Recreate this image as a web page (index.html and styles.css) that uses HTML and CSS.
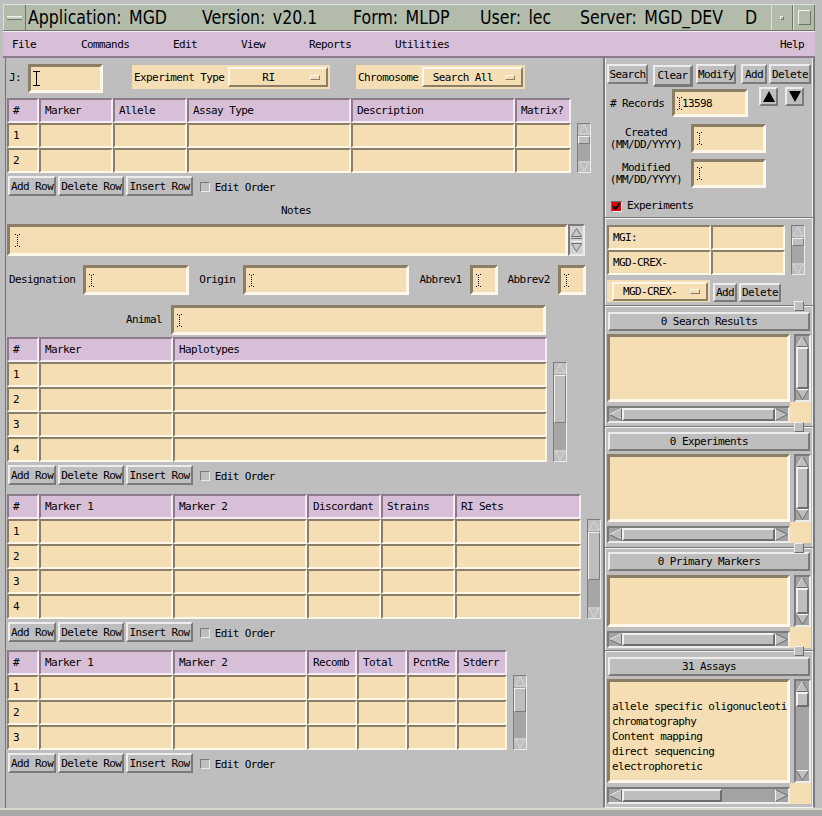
FILE: index.html
```html
<!DOCTYPE html>
<html>
<head>
<meta charset="utf-8">
<title>MGD MLDP</title>
<link rel="stylesheet" href="styles.css">
</head>
<body>
<div class="win">
  <div class="titlebar">
    <div class="tb-menu"><span class="tb-dash"></span></div>
    <div class="tb-title"><div class="tb-clip"><span class="tt tt1"><span class="ttx">Application: MGD</span></span><span class="tt tt2"><span class="ttx">Version: v20.1</span></span><span class="tt tt3"><span class="ttx">Form: MLDP</span></span><span class="tt tt4"><span class="ttx">User: lec</span></span><span class="tt tt5"><span class="ttx">Server: MGD_DEV</span></span><span class="tt tt6"><span class="ttx">Database: mgd</span></span></div></div>
    <div class="tb-btn"><span class="tb-min"></span></div>
    <div class="tb-btn"><span class="tb-max"></span></div>
  </div>
  <div class="menubar">
    <span class="mi mi-file">File</span><span class="mi mi-cmd">Commands</span><span class="mi mi-edit">Edit</span><span class="mi mi-view">View</span><span class="mi mi-rep">Reports</span><span class="mi mi-util">Utilities</span><span class="mi mi-help">Help</span>
  </div>
  <div class="main">
    <div class="left">
      <div class="row r-top">
        <span class="lbl l-j">J:</span>
        <div class="tf tf-j"><svg class="cur-solid" width="7" height="15" viewBox="0 0 7 15"><path d="M0 0.5h7M3.5 0.5v14M0 14.5h7" stroke="#000" fill="none"/></svg></div>
        <div class="opt o-exp"><span class="opt-lbl">Experiment Type</span><div class="ob ob-exp"><span class="ob-t">RI</span><span class="ind"></span></div></div>
        <div class="opt o-chr"><span class="opt-lbl">Chromosome</span><div class="ob ob-chr"><span class="ob-t">Search All</span><span class="ind"></span></div></div>
      </div>

      <div class="tbl t1">
        <div class="grid g1">
          <div class="hc">#</div><div class="hc">Marker</div><div class="hc">Allele</div><div class="hc">Assay Type</div><div class="hc">Description</div><div class="hc">Matrix?</div>
          <div class="c">1</div><div class="c"></div><div class="c"></div><div class="c"></div><div class="c"></div><div class="c"></div>
          <div class="c">2</div><div class="c"></div><div class="c"></div><div class="c"></div><div class="c"></div><div class="c"></div>
        </div>
        <div class="tsb sb-h50">
          <div class="tarr"><svg width="12" height="11" viewBox="0 0 12 11"><path d="M6 1L11 10H1Z" fill="none" stroke="#f2f2f2" stroke-dasharray="1 1"/></svg></div>
          <div class="ttr"><div class="tth" style="margin-top:1px;height:8px"></div></div>
          <div class="tarr"><svg width="12" height="11" viewBox="0 0 12 11"><path d="M6 10L11 1H1Z" fill="none" stroke="#f2f2f2" stroke-dasharray="1 1"/></svg></div>
        </div>
      </div>
      <div class="btnrow">
        <div class="btn">Add Row</div><div class="btn">Delete Row</div><div class="btn">Insert Row</div><span class="chk"></span><span class="lbl">Edit Order</span>
      </div>

      <div class="notes-lbl">Notes</div>
      <div class="row r-notes">
        <div class="tf tf-notes"><svg class="cur-dot" width="5" height="13" viewBox="0 0 5 13"><path d="M0 0.5h1M4 0.5h1M2.5 1v11M0 12.5h1M4 12.5h1" stroke="#000" stroke-dasharray="1 1" fill="none"/></svg></div>
        <div class="nsb">
          <svg width="11" height="9" viewBox="0 0 11 9"><path d="M5.5 0.5L10.5 8.5H0.5Z" fill="#c8c8c8" stroke="#707070"/></svg>
          <span class="nsb-th"></span>
          <svg width="11" height="9" viewBox="0 0 11 9"><path d="M5.5 8.5L10.5 0.5H0.5Z" fill="#c8c8c8" stroke="#707070"/></svg>
        </div>
      </div>

      <div class="row r-desig">
        <span class="lbl l-first">Designation</span>
        <div class="tf tf-desig"><svg class="cur-dot" width="5" height="13" viewBox="0 0 5 13"><path d="M0 0.5h1M4 0.5h1M2.5 1v11M0 12.5h1M4 12.5h1" stroke="#000" stroke-dasharray="1 1" fill="none"/></svg></div>
        <span class="lbl l-next">Origin</span>
        <div class="tf tf-origin"><svg class="cur-dot" width="5" height="13" viewBox="0 0 5 13"><path d="M0 0.5h1M4 0.5h1M2.5 1v11M0 12.5h1M4 12.5h1" stroke="#000" stroke-dasharray="1 1" fill="none"/></svg></div>
        <span class="lbl l-next">Abbrev1</span>
        <div class="tf tf-abbr"><svg class="cur-dot" width="5" height="13" viewBox="0 0 5 13"><path d="M0 0.5h1M4 0.5h1M2.5 1v11M0 12.5h1M4 12.5h1" stroke="#000" stroke-dasharray="1 1" fill="none"/></svg></div>
        <span class="lbl l-next">Abbrev2</span>
        <div class="tf tf-abbr"><svg class="cur-dot" width="5" height="13" viewBox="0 0 5 13"><path d="M0 0.5h1M4 0.5h1M2.5 1v11M0 12.5h1M4 12.5h1" stroke="#000" stroke-dasharray="1 1" fill="none"/></svg></div>
      </div>

      <div class="row r-animal">
        <span class="lbl l-animal">Animal</span>
        <div class="tf tf-animal"><svg class="cur-dot" width="5" height="13" viewBox="0 0 5 13"><path d="M0 0.5h1M4 0.5h1M2.5 1v11M0 12.5h1M4 12.5h1" stroke="#000" stroke-dasharray="1 1" fill="none"/></svg></div>
      </div>

      <div class="tbl t2">
        <div class="grid g2">
          <div class="hc">#</div><div class="hc">Marker</div><div class="hc">Haplotypes</div>
          <div class="c">1</div><div class="c"></div><div class="c"></div>
          <div class="c">2</div><div class="c"></div><div class="c"></div>
          <div class="c">3</div><div class="c"></div><div class="c"></div>
          <div class="c">4</div><div class="c"></div><div class="c"></div>
        </div>
        <div class="tsb sb-h100">
          <div class="tarr"><svg width="12" height="11" viewBox="0 0 12 11"><path d="M6 1L11 10H1Z" fill="none" stroke="#f2f2f2" stroke-dasharray="1 1"/></svg></div>
          <div class="ttr"><div class="tth" style="margin-top:1px;height:48px"></div></div>
          <div class="tarr"><svg width="12" height="11" viewBox="0 0 12 11"><path d="M6 10L11 1H1Z" fill="none" stroke="#f2f2f2" stroke-dasharray="1 1"/></svg></div>
        </div>
      </div>
      <div class="btnrow">
        <div class="btn">Add Row</div><div class="btn">Delete Row</div><div class="btn">Insert Row</div><span class="chk"></span><span class="lbl">Edit Order</span>
      </div>

      <div class="tbl t3">
        <div class="grid g3">
          <div class="hc">#</div><div class="hc">Marker 1</div><div class="hc">Marker 2</div><div class="hc">Discordant</div><div class="hc">Strains</div><div class="hc">RI Sets</div>
          <div class="c">1</div><div class="c"></div><div class="c"></div><div class="c"></div><div class="c"></div><div class="c"></div>
          <div class="c">2</div><div class="c"></div><div class="c"></div><div class="c"></div><div class="c"></div><div class="c"></div>
          <div class="c">3</div><div class="c"></div><div class="c"></div><div class="c"></div><div class="c"></div><div class="c"></div>
          <div class="c">4</div><div class="c"></div><div class="c"></div><div class="c"></div><div class="c"></div><div class="c"></div>
        </div>
        <div class="tsb sb-h100">
          <div class="tarr"><svg width="12" height="11" viewBox="0 0 12 11"><path d="M6 1L11 10H1Z" fill="none" stroke="#f2f2f2" stroke-dasharray="1 1"/></svg></div>
          <div class="ttr"><div class="tth" style="margin-top:1px;height:48px"></div></div>
          <div class="tarr"><svg width="12" height="11" viewBox="0 0 12 11"><path d="M6 10L11 1H1Z" fill="none" stroke="#f2f2f2" stroke-dasharray="1 1"/></svg></div>
        </div>
      </div>
      <div class="btnrow">
        <div class="btn">Add Row</div><div class="btn">Delete Row</div><div class="btn">Insert Row</div><span class="chk"></span><span class="lbl">Edit Order</span>
      </div>

      <div class="tbl t4">
        <div class="grid g4">
          <div class="hc">#</div><div class="hc">Marker 1</div><div class="hc">Marker 2</div><div class="hc">Recomb</div><div class="hc">Total</div><div class="hc">PcntRe</div><div class="hc">Stderr</div>
          <div class="c">1</div><div class="c"></div><div class="c"></div><div class="c"></div><div class="c"></div><div class="c"></div><div class="c"></div>
          <div class="c">2</div><div class="c"></div><div class="c"></div><div class="c"></div><div class="c"></div><div class="c"></div><div class="c"></div>
          <div class="c">3</div><div class="c"></div><div class="c"></div><div class="c"></div><div class="c"></div><div class="c"></div><div class="c"></div>
        </div>
        <div class="tsb sb-h75">
          <div class="tarr"><svg width="12" height="11" viewBox="0 0 12 11"><path d="M6 1L11 10H1Z" fill="none" stroke="#f2f2f2" stroke-dasharray="1 1"/></svg></div>
          <div class="ttr"><div class="tth" style="margin-top:1px;height:24px"></div></div>
          <div class="tarr"><svg width="12" height="11" viewBox="0 0 12 11"><path d="M6 10L11 1H1Z" fill="none" stroke="#f2f2f2" stroke-dasharray="1 1"/></svg></div>
        </div>
      </div>
      <div class="btnrow">
        <div class="btn">Add Row</div><div class="btn">Delete Row</div><div class="btn">Insert Row</div><span class="chk"></span><span class="lbl">Edit Order</span>
      </div>
    </div>

    <div class="right">
      <div class="rtop">
        <div class="rbtns">
          <div class="btn b-search">Search</div><div class="btn b-clear">Clear</div><div class="btn b-mod">Modify</div><div class="btn b-add">Add</div><div class="btn b-del">Delete</div>
        </div>
        <div class="rrow r-rec">
          <span class="lbl l-rec"># Records</span>
          <div class="tf tf-rec"><svg class="cur-dot" width="5" height="13" viewBox="0 0 5 13"><path d="M0 0.5h1M4 0.5h1M2.5 1v11M0 12.5h1M4 12.5h1" stroke="#000" stroke-dasharray="1 1" fill="none"/></svg><span class="rec-val">13598</span></div>
          <div class="abtn a-up"><svg width="12" height="11" viewBox="0 0 12 11"><path d="M6 0L12 11H0Z" fill="#000"/></svg></div>
          <div class="abtn a-dn"><svg width="12" height="11" viewBox="0 0 12 11"><path d="M6 11L12 0H0Z" fill="#000"/></svg></div>
        </div>
        <div class="rrow r-date">
          <span class="lbl l-date">Created<br>(MM/DD/YYYY)</span>
          <div class="tf tf-date"><svg class="cur-dot" width="5" height="13" viewBox="0 0 5 13"><path d="M0 0.5h1M4 0.5h1M2.5 1v11M0 12.5h1M4 12.5h1" stroke="#000" stroke-dasharray="1 1" fill="none"/></svg></div>
        </div>
        <div class="rrow r-date">
          <span class="lbl l-date">Modified<br>(MM/DD/YYYY)</span>
          <div class="tf tf-date"><svg class="cur-dot" width="5" height="13" viewBox="0 0 5 13"><path d="M0 0.5h1M4 0.5h1M2.5 1v11M0 12.5h1M4 12.5h1" stroke="#000" stroke-dasharray="1 1" fill="none"/></svg></div>
        </div>
        <div class="rchk">
          <svg class="chk-on" width="11" height="11" viewBox="0 0 11 11"><rect x="0" y="0" width="11" height="11" fill="#6e6e6e"/><rect x="1" y="1" width="10" height="10" fill="#f0f0f0"/><rect x="1" y="1" width="9" height="9" fill="#e00000"/><path d="M2 5l2.5 3L9 2" stroke="#000" stroke-width="2" fill="none"/></svg>
          <span class="lbl">Experiments</span>
        </div>
      </div>
      <div class="etch"></div>
      <div class="rmgi">
        <div class="tbl mgi-tbl">
          <div class="grid g-mgi">
            <div class="c">MGI:</div><div class="c"></div>
            <div class="c">MGD-CREX-</div><div class="c"></div>
          </div>
          <div class="tsb sb-h50 sb-mgi">
            <div class="tarr"><svg width="12" height="11" viewBox="0 0 12 11"><path d="M6 1L11 10H1Z" fill="none" stroke="#f2f2f2" stroke-dasharray="1 1"/></svg></div>
            <div class="ttr"><div class="tth" style="margin-top:1px;height:8px"></div></div>
            <div class="tarr"><svg width="12" height="11" viewBox="0 0 12 11"><path d="M6 10L11 1H1Z" fill="none" stroke="#f2f2f2" stroke-dasharray="1 1"/></svg></div>
          </div>
        </div>
        <div class="mgi-ctl">
          <div class="opt o-mgi"><div class="ob ob-mgi"><span class="ob-t">MGD-CREX-</span><span class="ind"></span></div></div>
          <div class="btn b-madd">Add</div><div class="btn b-mdel">Delete</div>
        </div>
      </div>

      <div class="sep"><span class="sash"></span></div>
      <div class="pane p-std">
        <div class="plbl">0 Search Results</div>
        <div class="lw lw-68">
          <div class="list"></div>
          <div class="lvsb">
            <svg width="13" height="11" viewBox="0 0 13 11"><path d="M6.5 0.5L12.5 10.5H0.5Z" fill="#bebebe" stroke="#6e6e6e"/><path d="M0.5 10.5L6.5 0.5" stroke="#f4f4f4"/></svg>
            <div class="lvtr"><div class="lvth lvth-full"></div></div>
            <svg width="13" height="11" viewBox="0 0 13 11"><path d="M6.5 10.5L12.5 0.5H0.5Z" fill="#bebebe" stroke="#6e6e6e"/><path d="M0.5 0.5H12.5" stroke="#f4f4f4"/></svg>
          </div>
          <div class="corner"></div>
          <div class="lhsb">
            <svg width="13" height="13" viewBox="0 0 13 13"><path d="M0.5 6.5L12.5 0.5V12.5Z" fill="#bebebe" stroke="#6e6e6e"/><path d="M0.5 6.5L12.5 0.5" stroke="#f4f4f4"/></svg>
            <div class="lhtr"><div class="lhth lhth-full"></div></div>
            <svg width="13" height="13" viewBox="0 0 13 13"><path d="M12.5 6.5L0.5 0.5V12.5Z" fill="#bebebe" stroke="#6e6e6e"/><path d="M0.5 0.5V12.5" stroke="#f4f4f4"/></svg>
          </div>
        </div>
      </div>
      <div class="sep"><span class="sash"></span></div>
      <div class="pane p-std p-exp">
        <div class="plbl">0 Experiments</div>
        <div class="lw lw-68">
          <div class="list"></div>
          <div class="lvsb">
            <svg width="13" height="11" viewBox="0 0 13 11"><path d="M6.5 0.5L12.5 10.5H0.5Z" fill="#bebebe" stroke="#6e6e6e"/><path d="M0.5 10.5L6.5 0.5" stroke="#f4f4f4"/></svg>
            <div class="lvtr"><div class="lvth lvth-full"></div></div>
            <svg width="13" height="11" viewBox="0 0 13 11"><path d="M6.5 10.5L12.5 0.5H0.5Z" fill="#bebebe" stroke="#6e6e6e"/><path d="M0.5 0.5H12.5" stroke="#f4f4f4"/></svg>
          </div>
          <div class="corner"></div>
          <div class="lhsb">
            <svg width="13" height="13" viewBox="0 0 13 13"><path d="M0.5 6.5L12.5 0.5V12.5Z" fill="#bebebe" stroke="#6e6e6e"/><path d="M0.5 6.5L12.5 0.5" stroke="#f4f4f4"/></svg>
            <div class="lhtr"><div class="lhth lhth-full"></div></div>
            <svg width="13" height="13" viewBox="0 0 13 13"><path d="M12.5 6.5L0.5 0.5V12.5Z" fill="#bebebe" stroke="#6e6e6e"/><path d="M0.5 0.5V12.5" stroke="#f4f4f4"/></svg>
          </div>
        </div>
      </div>
      <div class="sep"><span class="sash"></span></div>
      <div class="pane p-prim">
        <div class="plbl">0 Primary Markers</div>
        <div class="lw lw-52">
          <div class="list"></div>
          <div class="lvsb">
            <svg width="13" height="11" viewBox="0 0 13 11"><path d="M6.5 0.5L12.5 10.5H0.5Z" fill="#bebebe" stroke="#6e6e6e"/><path d="M0.5 10.5L6.5 0.5" stroke="#f4f4f4"/></svg>
            <div class="lvtr"><div class="lvth lvth-full"></div></div>
            <svg width="13" height="11" viewBox="0 0 13 11"><path d="M6.5 10.5L12.5 0.5H0.5Z" fill="#bebebe" stroke="#6e6e6e"/><path d="M0.5 0.5H12.5" stroke="#f4f4f4"/></svg>
          </div>
          <div class="corner"></div>
          <div class="lhsb">
            <svg width="13" height="13" viewBox="0 0 13 13"><path d="M0.5 6.5L12.5 0.5V12.5Z" fill="#bebebe" stroke="#6e6e6e"/><path d="M0.5 6.5L12.5 0.5" stroke="#f4f4f4"/></svg>
            <div class="lhtr"><div class="lhth lhth-full"></div></div>
            <svg width="13" height="13" viewBox="0 0 13 13"><path d="M12.5 6.5L0.5 0.5V12.5Z" fill="#bebebe" stroke="#6e6e6e"/><path d="M0.5 0.5V12.5" stroke="#f4f4f4"/></svg>
          </div>
        </div>
      </div>
      <div class="sep"><span class="sash"></span></div>
      <div class="pane p-assay">
        <div class="plbl">31 Assays</div>
        <div class="lw lw-104">
          <div class="list">
            <div class="li"></div>
            <div class="li">allele specific oligonucleoti</div>
            <div class="li">chromatography</div>
            <div class="li">Content mapping</div>
            <div class="li">direct sequencing</div>
            <div class="li">electrophoretic</div>
          </div>
          <div class="lvsb">
            <svg width="13" height="11" viewBox="0 0 13 11"><path d="M6.5 0.5L12.5 10.5H0.5Z" fill="#bebebe" stroke="#6e6e6e"/><path d="M0.5 10.5L6.5 0.5" stroke="#f4f4f4"/></svg>
            <div class="lvtr"><div class="lvth" style="height:15px"></div></div>
            <svg width="13" height="11" viewBox="0 0 13 11"><path d="M6.5 10.5L12.5 0.5H0.5Z" fill="#bebebe" stroke="#6e6e6e"/><path d="M0.5 0.5H12.5" stroke="#f4f4f4"/></svg>
          </div>
          <div class="corner"></div>
          <div class="lhsb">
            <svg width="13" height="13" viewBox="0 0 13 13"><path d="M0.5 6.5L12.5 0.5V12.5Z" fill="#bebebe" stroke="#6e6e6e"/><path d="M0.5 6.5L12.5 0.5" stroke="#f4f4f4"/></svg>
            <div class="lhtr"><div class="lhth" style="width:100px"></div></div>
            <svg width="13" height="13" viewBox="0 0 13 13"><path d="M12.5 6.5L0.5 0.5V12.5Z" fill="#bebebe" stroke="#6e6e6e"/><path d="M0.5 0.5V12.5" stroke="#f4f4f4"/></svg>
          </div>
        </div>
      </div>
    </div>
  </div>
  <div class="bottom"></div>
</div>
</body>
</html>
```

FILE: styles.css
```css
* { box-sizing: border-box; margin: 0; padding: 0; }
body { margin: 0; background: #bebebe; }

.win {
  width: 822px; height: 816px; overflow: hidden;
  background: #bebebe;
  display: flex; flex-direction: column;
  font: 11px "DejaVu Sans Mono", "Liberation Mono", monospace;
  letter-spacing: -0.6px;
  color: #000;
}

/* ---------- title bar ---------- */
.titlebar {
  height: 27px; margin: 4px 7px 0 3px; flex: none;
  display: flex; background: #b3bcaa;
  border-top: 1px solid #dde2d6; border-bottom: 1px solid #6f7768;
}
.tb-menu {
  width: 23px; flex: none; display: flex; align-items: center; justify-content: center;
  border-left: 1px solid #dde2d6; border-right: 1px solid #6f7768;
}
.tb-dash { width: 15px; height: 4px; background: #c9d0c1; border-top: 1px solid #f0f2ec; border-bottom: 1px solid #6f7768; }
.tb-title { flex: 1; min-width: 0; padding: 0 14px 0 2px; overflow: hidden; }
.tb-clip {
  overflow: hidden; white-space: nowrap; height: 25px;
  font-family: "DejaVu Sans", sans-serif;
  font-size: 20px; line-height: 25px;
  letter-spacing: 0;
}
.tt { display: inline-block; vertical-align: top; height: 25px; }
.ttx { display: inline-block; vertical-align: top; transform: scaleX(0.79); transform-origin: 0 50%; word-spacing: 3px; }
.tt1 { width: 174px; }
.tt2 { width: 151px; }
.tt3 { width: 127px; }
.tt4 { width: 100px; }
.tt5 { width: 165px; }
.tt6 { width: 120px; }
.tb-btn {
  width: 22px; flex: none; display: flex; align-items: center; justify-content: center;
  border-left: 1px solid #dde2d6; border-right: 1px solid #6f7768;
}
.tb-min { width: 4px; height: 4px; border: 1px solid; border-color: #f0f2ec #6f7768 #6f7768 #f0f2ec; }
.tb-max { width: 13px; height: 15px; border: 1px solid; border-color: #f0f2ec #6f7768 #6f7768 #f0f2ec; }

/* ---------- menu bar ---------- */
.menubar {
  height: 27px; margin: 0 7px 0 3px; flex: none;
  display: flex; align-items: center;
  background: #d8bfd8; padding-left: 9px;
  border-top: 1px solid #f6ecf6; border-bottom: 2px solid #8b7b8b;
}
.mi { display: inline-block; }
.mi-file { width: 69px; }
.mi-cmd { width: 92px; }
.mi-edit { width: 68px; }
.mi-view { width: 68px; }
.mi-rep { width: 86px; }
.mi-help { margin-left: auto; padding-right: 11px; }

/* ---------- main ---------- */
.main { display: flex; height: 750px; flex: none; margin-right: 7px; }
.left {
  width: 603px; padding-left: 4px;
  border-left: 3px solid #bebebe;
  box-shadow: inset 2px 0 0 #bebebe, inset 3px 0 0 #747474;
  display: flex; flex-direction: column;
}
.lbl { white-space: nowrap; line-height: 12px; }
.row { display: flex; align-items: center; flex: none; }

/* text fields */
.tf {
  background: #f5deb3; flex: none;
  border: 3px solid; border-color: #8b7e66 #fff8ea #fff8ea #8b7e66;
  display: flex; align-items: center; padding-left: 3px;
}
.cur-dot { display: block; }
.cur-solid { display: block; }

.r-top { margin-top: 6px; height: 29px; align-items: flex-start; }
.l-j { margin: 8px 0 0 2px; }
.tf-j { margin-left: 7px; width: 75px; height: 29px; padding-left: 2px; }

/* option menus */
.opt { background: #f5deb3; display: flex; align-items: center; padding: 0 2px; height: 24px; flex: none; }
.opt-lbl { white-space: nowrap; flex: none; }
.o-exp { margin: 1px 0 0 29px; width: 198px; }
.o-chr { margin: 1px 0 0 26px; width: 169px; }
.ob {
  height: 20px; margin-left: 4px; display: flex; align-items: center; flex: none;
  border: 2px solid; border-color: #fff8ea #8b7e66 #8b7e66 #fff8ea;
}
.ob-t { flex: 1; text-align: center; white-space: nowrap; }
.ob-exp { width: 100px; }
.ob-chr { width: 101px; }
.ind {
  width: 10px; height: 5px; margin: 0 6px 0 4px; flex: none;
  border: 1px solid; border-color: #fff8ea #8b7e66 #8b7e66 #fff8ea;
}

/* tables */
.tbl { display: flex; align-items: flex-start; flex: none; }
.grid { display: grid; grid-auto-rows: 25px; background: #fff8ea; }
.hc, .c {
  border: 2px solid; padding-left: 4px;
  display: flex; align-items: center; white-space: nowrap; overflow: hidden;
}
.hc { background: #d8bfd8; border-color: #8b7b8b #f6ecf6 #f6ecf6 #8b7b8b; }
.c { background: #f5deb3; border-color: #8b7e66 #fff8ea #fff8ea #8b7e66; }
.g1 { grid-template-columns: 32px 74px 74px 164px 164px 56px; }
.g2 { grid-template-columns: 32px 134px 374px; }
.g3 { grid-template-columns: 32px 134px 134px 74px 74px 126px; }
.g4 { grid-template-columns: 32px 134px 134px 50px 50px 50px 50px; }
.g-mgi { grid-template-columns: 104px 74px; }

.t1 { margin-top: 5px; }
.t2 { margin-top: 2px; }
.t3 { margin-top: 9px; }
.t4 { margin-top: 8px; }

/* table scrollbars */
.tsb {
  width: 14px; margin: 25px 0 0 6px; flex: none;
  border: 1px solid; border-color: #7c7c7c #ececec #ececec #7c7c7c;
  background: #a6a6a6; display: flex; flex-direction: column;
}
.sb-mgi { margin-top: 0; }
.sb-h50 { height: 50px; }
.sb-h75 { height: 75px; }
.sb-h100 { height: 100px; }
.tarr { height: 11px; background: #bebebe; flex: none; }
.tarr svg { display: block; }
.ttr { flex: 1; }
.tth { background: #bebebe; border: 1px solid; border-color: #f0f0f0 #7c7c7c #7c7c7c #f0f0f0; }

/* buttons */
.btnrow { display: flex; align-items: center; height: 20px; margin-top: 3px; flex: none; padding-left: 1px; }
.btn {
  height: 20px; padding: 0 1px; background: #bebebe; flex: none;
  border: 2px solid; border-color: #ececec #7a7a7a #7a7a7a #ececec;
  display: flex; align-items: center; justify-content: center; white-space: nowrap;
}
.btnrow .btn + .btn { margin-left: 2px; }
.chk {
  width: 10px; height: 10px; margin: 2px 5px 0 7px; flex: none;
  border: 1px solid; border-color: #7a7a7a #ececec #ececec #7a7a7a;
}
.btnrow .lbl { margin-top: 3px; }

/* notes */
.notes-lbl { margin-top: 9px; height: 12px; line-height: 12px; width: 578px; text-align: center; flex: none; }
.r-notes { margin-top: 7px; height: 32px; }
.tf-notes { width: 561px; height: 32px; padding-left: 5px; }
.nsb {
  width: 17px; height: 32px; background: #d2d2d2; flex: none;
  border: 2px solid; border-color: #7c7c7c #ececec #ececec #7c7c7c;
  display: flex; flex-direction: column; align-items: center; justify-content: center;
}
.nsb svg { display: block; }
.nsb-th { width: 11px; height: 4px; margin: 1px 0; border-top: 1px solid #707070; border-bottom: 1px solid #f4f4f4; }

.r-desig { margin-top: 9px; height: 30px; }
.l-first { margin-left: 2px; margin-right: 8px; }
.l-next { margin-left: 10px; margin-right: 8px; }
.tf-desig { width: 106px; height: 30px; }
.tf-origin { width: 166px; height: 30px; }
.tf-abbr { width: 28px; height: 30px; }

.r-animal { margin-top: 10px; height: 30px; }
.l-animal { margin-left: 119px; margin-right: 9px; }
.tf-animal { width: 375px; height: 30px; }

/* ---------- right panel ---------- */
.right {
  width: 212px; display: flex; flex-direction: column;
  border-left: 2px solid; border-right: 2px solid; border-bottom: 1px solid #f0f0f0;
  border-left-color: #7a7a7a; border-right-color: #7a7a7a;
  box-shadow: inset 1px 0 0 #f0f0f0, inset -1px 0 0 #f0f0f0;
}
.rtop { height: 159px; padding: 6px 0 0 2px; flex: none; display: flex; flex-direction: column; }
.rbtns { display: flex; align-items: flex-start; height: 22px; flex: none; }
.b-search { width: 41px; }
.b-clear { width: 40px; height: 22px; margin-left: 5px; margin-top: 1px; border-width: 2px 3px 3px 2px; }
.b-mod { width: 40px; margin-left: 3px; }
.b-add { width: 26px; margin-left: 5px; }
.b-del { width: 42px; margin-left: 2px; }

.rrow { display: flex; align-items: center; flex: none; }
.r-rec { margin-top: 1px; height: 31px; align-items: flex-start; }
.l-rec { margin: 11px 0 0 3px; width: 62px; }
.tf-rec { width: 76px; height: 28px; margin-top: 2px; padding-left: 2px; }
.abtn {
  width: 19px; height: 19px; background: #bebebe; flex: none;
  border: 2px solid; border-color: #ececec #7a7a7a #7a7a7a #ececec;
  display: flex; align-items: center; justify-content: center;
}
.abtn svg { display: block; }
.a-up { margin-left: 11px; }
.a-dn { margin-left: 7px; }

.r-date { margin-top: 6px; height: 29px; }
.l-date { width: 78px; text-align: center; line-height: 12px; margin-top: 1px; }
.tf-date { width: 75px; height: 29px; margin-left: 6px; }

.rchk { display: flex; align-items: center; margin-top: 12px; height: 12px; padding-left: 4px; flex: none; }
.chk-on { display: block; margin-right: 5px; }

.etch { height: 2px; flex: none; border-top: 1px solid #7a7a7a; border-bottom: 1px solid #f0f0f0; }

.rmgi { height: 86px; padding: 6px 0 0 2px; flex: none; display: flex; flex-direction: column; }
.mgi-ctl { display: flex; align-items: flex-start; margin-top: 5px; height: 22px; }
.o-mgi { width: 103px; height: 22px; padding: 0; }
.ob-mgi { width: 96px; height: 19px; margin-left: 5px; }
.b-madd { width: 24px; height: 19px; margin: 3px 0 0 3px; padding: 0; }
.b-mdel { width: 42px; height: 19px; margin: 3px 0 0 2px; }

.sep {
  height: 2px; flex: none; position: relative;
  border-top: 1px solid #7a7a7a; border-bottom: 1px solid #f0f0f0;
}
.sash {
  position: absolute; right: 9px; top: -5px; width: 10px; height: 10px;
  background: #bebebe; border: 1px solid; border-color: #f0f0f0 #6e6e6e #6e6e6e #f0f0f0;
}

.pane { display: flex; flex-direction: column; padding: 0 2px; flex: none; }
.p-std { height: 119px; padding-top: 5px; }
.p-exp { padding-top: 4px; }
.p-prim { height: 101px; padding-top: 3px; }
.p-assay { height: 155px; padding-top: 5px; }
.plbl {
  height: 19px; margin: 0 1px; flex: none; text-align: center; line-height: 15px;
  border: 2px solid; border-color: #ececec #7a7a7a #7a7a7a #ececec;
}
.lw {
  display: grid; margin-top: 3px; flex: none;
  grid-template-columns: 183px 4px 17px;
}
.p-prim .lw { margin-top: 4px; }
.lw-68 { grid-template-rows: 68px 4px 17px; }
.lw-52 { grid-template-rows: 52px 4px 17px; }
.lw-104 { grid-template-rows: 104px 4px 17px; }
.list {
  grid-column: 1; grid-row: 1; background: #f5deb3;
  border: 3px solid; border-color: #8b7e66 #fff8ea #fff8ea #8b7e66;
  padding: 2px 0 0 2px; overflow: hidden;
}
.li { height: 15px; line-height: 15px; white-space: nowrap; }
.lvsb {
  grid-column: 3; grid-row: 1; background: #a3a3a3;
  border: 2px solid; border-color: #7a7a7a #ececec #ececec #7a7a7a;
  display: flex; flex-direction: column; align-items: center;
}
.lvsb svg { display: block; flex: none; }
.lvtr { flex: 1; width: 13px; }
.lvth { width: 13px; background: #bebebe; border: 2px solid; border-color: #f0f0f0 #6e6e6e #6e6e6e #f0f0f0; }
.lvth-full { height: 100%; }
.corner { grid-column: 2 / 4; grid-row: 2 / 4; background: #f5deb3; }
.lhsb {
  grid-column: 1; grid-row: 3; background: #a3a3a3;
  border: 2px solid; border-color: #7a7a7a #ececec #ececec #7a7a7a;
  display: flex; align-items: center;
}
.lhsb svg { display: block; flex: none; }
.lhtr { flex: 1; height: 13px; }
.lhth { height: 13px; background: #bebebe; border: 2px solid; border-color: #f0f0f0 #6e6e6e #6e6e6e #f0f0f0; }
.lhth-full { width: 100%; }

/* ---------- bottom frame ---------- */
.bottom { height: 8px; flex: none; border-top: 2px solid #d6dbd0; background: #a9a9a9; }
```
